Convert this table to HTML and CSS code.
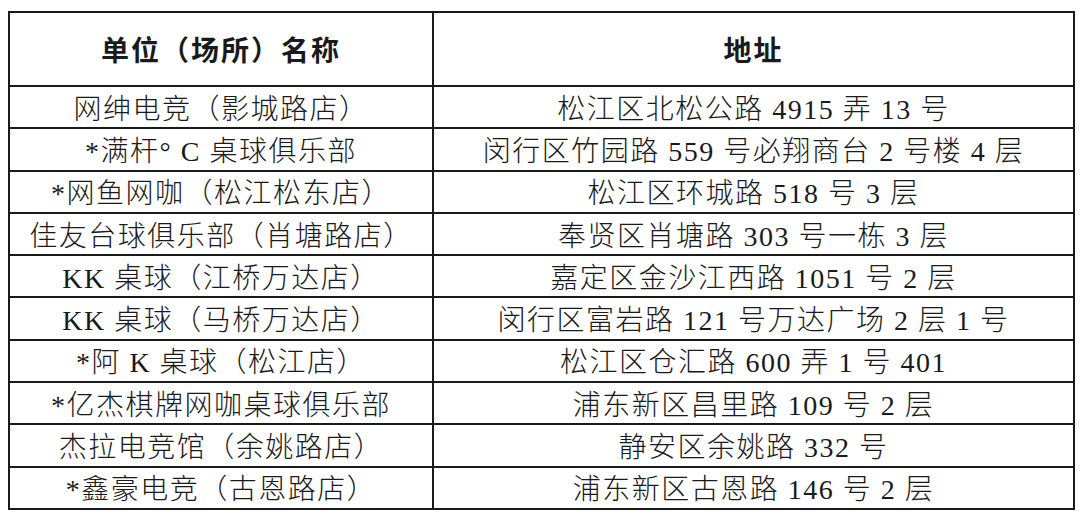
FILE: index.html
```html
<!DOCTYPE html>
<html lang="zh-CN">
<head>
<meta charset="utf-8">
<title>单位（场所）名称</title>
<link rel="stylesheet" href="styles.css">
</head>
<body>
<table class="venues">
  <colgroup><col class="col-name"><col class="col-addr"></colgroup>
  <thead>
    <tr class="head-row"><th>单位（场所）名称</th><th>地址</th></tr>
  </thead>
  <tbody>
    <tr><td>网绅电竞（影城路店）</td><td>松江区北松公路 4915 弄 13 号</td></tr>
    <tr><td>*满杆°&nbsp;C 桌球俱乐部</td><td>闵行区竹园路 559 号必翔商台 2 号楼 4 层</td></tr>
    <tr><td>*网鱼网咖（松江松东店）</td><td>松江区环城路 518 号 3 层</td></tr>
    <tr><td>佳友台球俱乐部（肖塘路店）</td><td>奉贤区肖塘路 303 号一栋 3 层</td></tr>
    <tr><td>KK 桌球（江桥万达店）</td><td>嘉定区金沙江西路 1051 号 2 层</td></tr>
    <tr><td>KK 桌球（马桥万达店）</td><td>闵行区富岩路 121 号万达广场 2 层 1 号</td></tr>
    <tr><td>*阿 K 桌球（松江店）</td><td>松江区仓汇路 600 弄 1 号 401</td></tr>
    <tr><td>*亿杰棋牌网咖桌球俱乐部</td><td>浦东新区昌里路 109 号 2 层</td></tr>
    <tr><td>杰拉电竞馆（余姚路店）</td><td>静安区余姚路 332 号</td></tr>
    <tr><td>*鑫豪电竞（古恩路店）</td><td>浦东新区古恩路 146 号 2 层</td></tr>
  </tbody>
</table>
</body>
</html>
```

FILE: styles.css
```css
html, body {
  margin: 0;
  padding: 0;
  background: #ffffff;
}

body {
  padding: 11px 0 0 8px;
  font-family: "Liberation Serif", "Noto Sans CJK SC", serif;
  color: #1a1a1a;
}

.venues {
  border-collapse: collapse;
  width: 1065px;
  table-layout: fixed;
}

.col-name { width: 424px; }
.col-addr { width: 641px; }

.venues th,
.venues td {
  border: 2px solid #1a1a1a;
  padding: 0;
  text-align: center;
  vertical-align: middle;
  white-space: nowrap;
  font-size: 28px;
  letter-spacing: 1.5px;
  line-height: 30px;
}

.venues th {
  height: 66px;
  padding-top: 6px;
  font-weight: 700;
  letter-spacing: 2px;
}

.venues td {
  height: 35.3px;
  padding-top: 5px;
  font-weight: 300;
}
```
